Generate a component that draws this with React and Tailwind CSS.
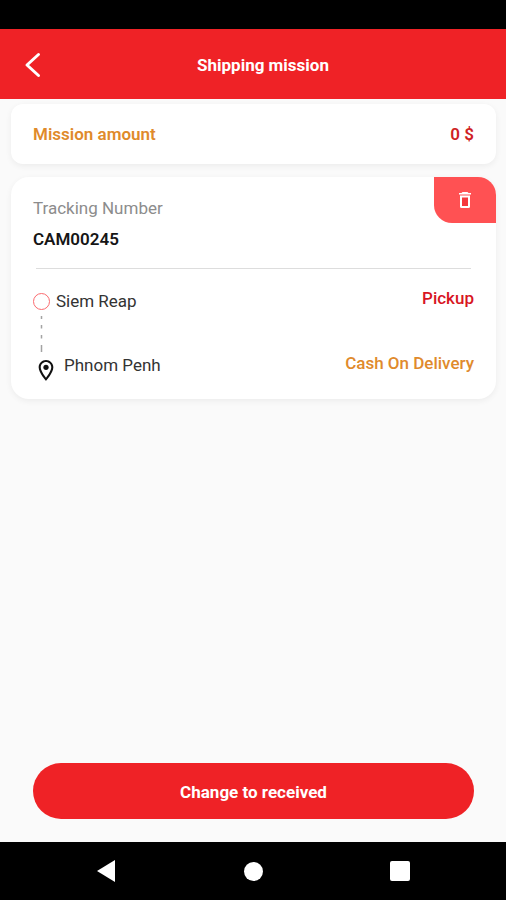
import React from "react";
import { clsx } from "clsx";

const mission = {
    amount: "0 $",
    trackingNumber: "CAM00245",
    from: "Siem Reap",
    to: "Phnom Penh",
    type: "Pickup",
    payment: "Cash On Delivery",
};

const Card = ({ className, children }) => (
    <section className={clsx("bg-white shadow-[0_2px_6px_rgba(0,0,0,0.06)]", className)}>
        {children}
    </section>
);

function Header({ title }) {
    return (
        <header className="grid h-[70px] grid-cols-[74px_1fr_54px] items-center bg-[#ef2226] text-white">
            <button type="button" aria-label="Back" className="flex h-full items-center pt-[2px] pl-6">
                <svg viewBox="0 0 18 26" className="h-[26px] w-[18px]" fill="none" stroke="currentColor" strokeWidth="3">
                    <path d="M14.500 2.500 3 13l11.500 10.500" strokeLinejoin="round" strokeLinecap="round" />
                </svg>
            </button>
            <h1 className="pt-[2px] text-center font-bold">{title}</h1>
        </header>
    );
}

function DeleteButton() {
    return (
        <button
            type="button"
            aria-label="Delete mission"
            className="flex h-[46px] w-[62px] items-center justify-center rounded-tr-[18px] rounded-bl-[18px] bg-[#ff5153] text-white"
        >
            <svg viewBox="0 0 14 18" className="h-[18px] w-3.5" fill="currentColor">
                <path d="M4.500 1h5l1 1H13v1.500H1V2h2.500z" />
                <path d="M2 4.500h10V15.500a1.500 1.500 0 0 1-1.500 1.500h-7A1.500 1.500 0 0 1 2 15.500z" />
                <path d="M4 6.500h6v8.500H4z" className="text-[#f5383d]" />
            </svg>
        </button>
    );
}

function Route({ from, to }) {
    return (
        <div className="flex flex-col text-[#333333]">
            <div className="flex h-6 items-center gap-[6px]">
                <span className="size-[17px] rounded-full border border-[#fb6b6f]" />
                <span>{from}</span>
            </div>
            {/* dashes between the two stops */}
            <svg viewBox="0 0 17 40" className="h-10 w-[17px]" stroke="#a3a3a3" strokeWidth="1.500">
                <path d="M8.500 3v3M8.500 12v3.500M8.500 22v3.500M8.500 32v7" />
            </svg>
            <div className="flex h-6 items-start gap-[10px] pl-[5px]">
                <svg viewBox="5 2 14 20" className="mt-[7px] h-[21px] w-4 shrink-0" fill="#111111">
                    <path d="M12 2C8.130 2 5 5.130 5 9c0 5.250 7 13 7 13s7-7.750 7-13c0-3.870-3.130-7-7-7zM7 9c0-2.760 2.240-5 5-5s5 2.240 5 5c0 2.880-2.880 7.190-5 9.880C9.920 16.210 7 11.850 7 9z" />
                    <circle cx="12" cy="9" r="2.500" />
                </svg>
                <span>{to}</span>
            </div>
        </div>
    );
}

function SystemNav() {
    return (
        <nav className="flex h-[58px] items-center justify-around bg-black px-[33px] text-white">
            <button type="button" aria-label="System back">
                <svg viewBox="0 0 20 22" className="h-[22px] w-5" fill="currentColor">
                    <path d="M0 11 18 0v22z" />
                </svg>
            </button>
            <button type="button" aria-label="Home" className="size-[19px] rounded-full bg-white" />
            <button type="button" aria-label="Recent apps" className="size-5 rounded-[2px] bg-white" />
        </nav>
    );
}

export default function App() {
    return (
        <div className="flex min-h-screen flex-col bg-[#fafafa] font-['Roboto',sans-serif] text-[17px] leading-6">
            <div className="h-[29px] bg-black" />
            <Header title="Shipping mission" />

            <main className="flex flex-1 flex-col pt-[5px] pr-[10px] pl-[11px]">
                <Card className="flex h-[60px] items-center justify-between rounded-xl px-[22px] font-semibold">
                    <h2 className="text-[#df8a2b]">Mission amount</h2>
                    <span className="text-[#cf1f25]">{mission.amount}</span>
                </Card>

                <Card className="relative mt-[13px] rounded-[18px] px-[22px] pt-[19px] pb-[22px]">
                    <div className="absolute top-0 right-0">
                        <DeleteButton />
                    </div>
                    <p className="text-[#8c8c8c]">Tracking Number</p>
                    <p className="mt-[7px] font-semibold text-[#151515]">{mission.trackingNumber}</p>
                    <hr className="mx-[3px] mt-[17px] border-[#dddddd]" />

                    <div className="mt-5 flex justify-between">
                        <Route from={mission.from} to={mission.to} />
                        <div className="flex flex-col gap-[41px] text-right font-medium">
                            <span className="-mt-[3px] text-[#d8151f]">{mission.type}</span>
                            <span className="text-[#e08a2c]">{mission.payment}</span>
                        </div>
                    </div>
                </Card>

                <button
                    type="button"
                    className="mx-[22px] mt-auto mb-[23px] h-14 rounded-full bg-[#ef2226] pt-[2px] font-bold text-white"
                >
                    Change to received
                </button>
            </main>

            <SystemNav />
        </div>
    );
}
